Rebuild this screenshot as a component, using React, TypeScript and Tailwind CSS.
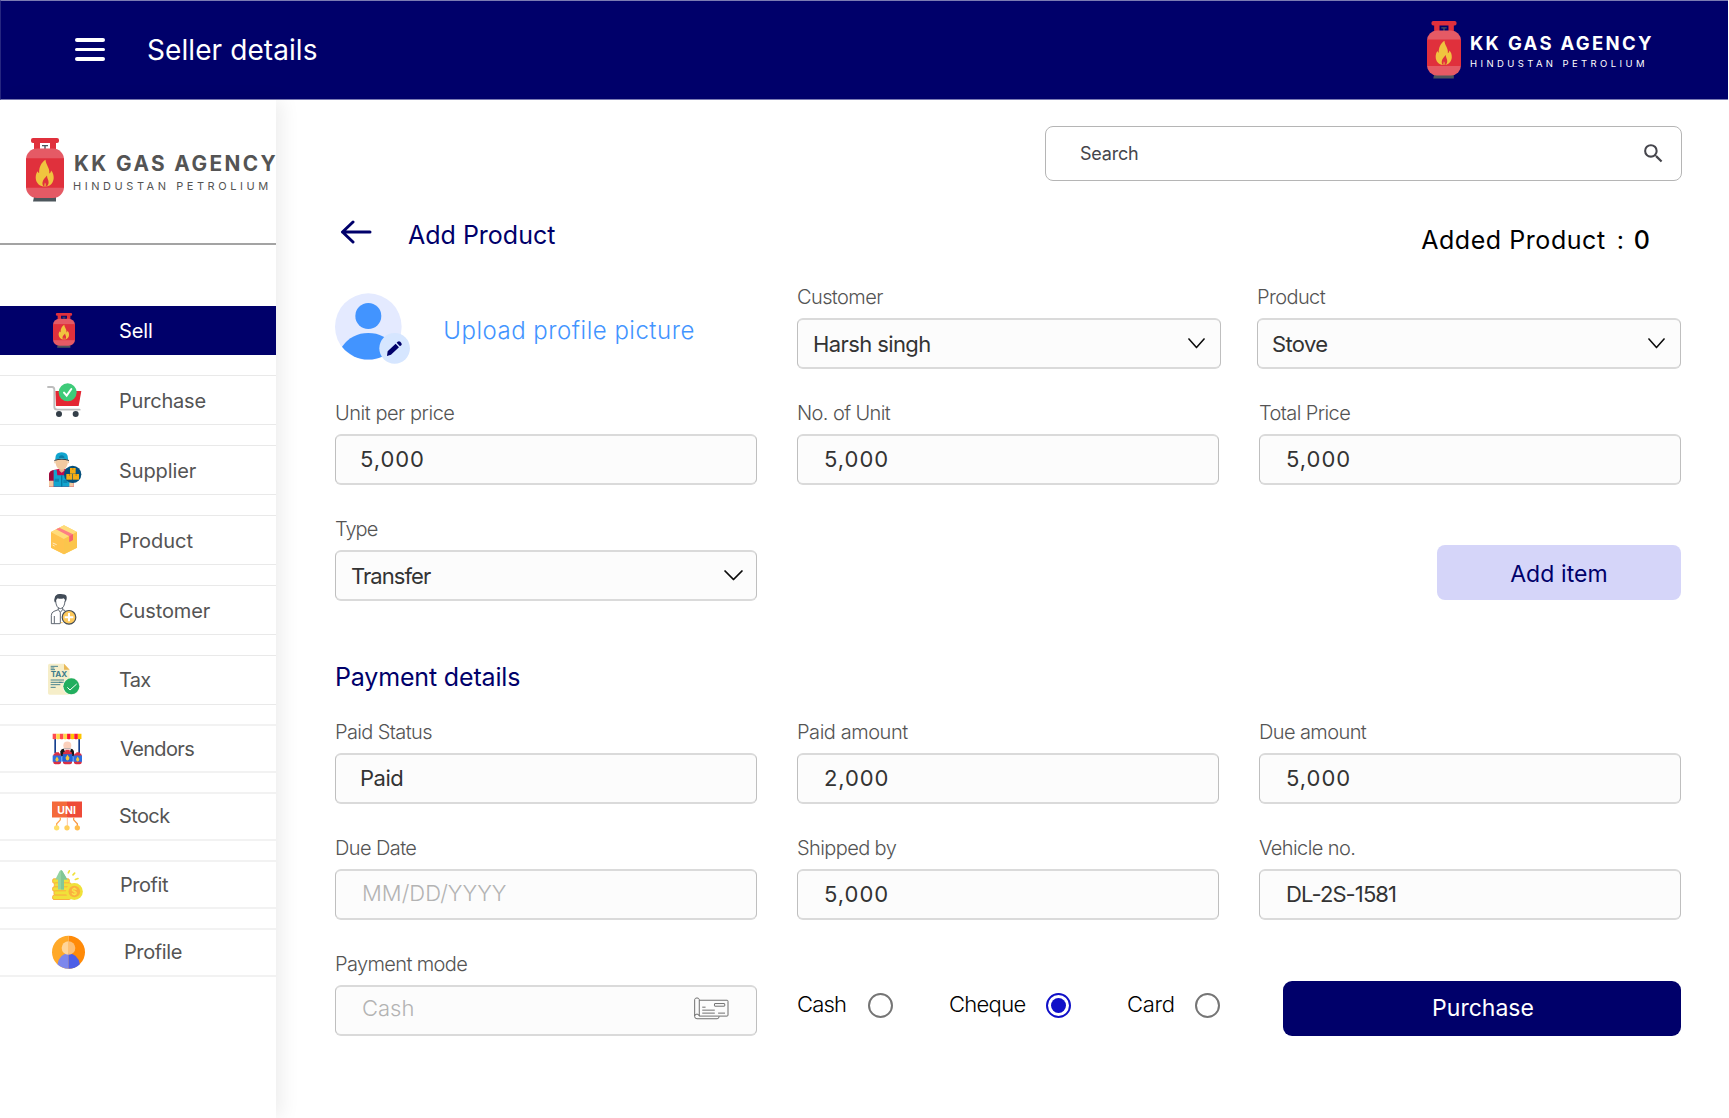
import type { ReactNode } from "react";
import { MdSearch } from "react-icons/md";

function Cylinder({ className }: { className: string }) {
  return (
    <svg viewBox="0 0 38 64" className={className} preserveAspectRatio="none">
      <path d="M8 3h6v10H8zM24 3h6v10h-6z" fill="#e0303c" />
      <rect x="5" y="0" width="28" height="5" rx="2" fill="#e0303c" />
      <path d="M16 7h6v1.3h-2.3V11h-1.4V8.300H16z" fill="#4d565c" />
      <path d="M8 59h22v4.500H7z" fill="#4d565c" />
      <rect x="0" y="10.500" width="38" height="49.500" rx="11" fill="#e55a65" />
      <path d="M0 20.300h38v29.400H0z" fill="#e0303c" />
      <path
        d="M19.500 21.700C19.800 27 24 29.500 23.300 35.500c1.200-.6 1.700-1.700 1.700-3 2 2 2.800 4.600 2.700 7.500-.2 4.500-3 7.700-7 8.500h-3.600C13 47.800 9.700 44.500 9.700 39.500c0-2.500.8-4.700 1.900-6.300.3 1 .8 1.600 1.500 1.900C13 28.800 15.300 24.500 19.500 21.700z"
        fill="#f0c43f"
      />
      <path d="M21 37.500c-.1 3.200 1.800 4.300 1.600 7.200-.1 1.800-1 3.200-2.300 3.800h-.9c.7-1.800.2-3-.5-4-.2 1.300-.6 2.400-.4 4h-.7c-1.100-.7-1.500-2.300-1.300-4 .4-3 2.600-4.500 4.500-7z" fill="#e0303c" />
    </svg>
  );
}

function NavIcon({ y, children }: { y: number; children: ReactNode }) {
  return (
    <svg viewBox={`141 ${y} 108 108`} className="h-9 w-9 shrink-0 overflow-visible">
      {children}
    </svg>
  );
}

function PurchaseIcon() {
  return (
    <NavIcon y={276}>
      <path d="M166 303h78l-8 45h-68z" fill="#e42733" />
      <path d="M144 291h12q7 0 7 8v52q0 8 9 8h67" fill="none" stroke="#bdbdbd" strokeWidth="5.500" strokeLinecap="round" />
      <circle cx="177" cy="372" r="9" fill="#333e48" />
      <circle cx="227" cy="372" r="9" fill="#333e48" />
      <circle cx="203" cy="307" r="27" fill="#3ecb79" />
      <path d="M192 308l8 9 14-20" fill="none" stroke="#fff" strokeWidth="6" strokeLinecap="round" />
    </NavIcon>
  );
}

function SupplierIcon() {
  return (
    <NavIcon y={486}>
      <path d="M147 591v-35q0-13 14-16l14-3h20l14 3q12 3 12 16v35z" fill="#c00a4d" />
      <path d="M147 572v-16q0-13 14-15v31z" fill="#9b0b3c" />
      <path d="M147 572h14v18h-14zM207 574h14v16h-14z" fill="#f1c9a0" />
      <path d="M161 590v-50h9l2 16h26l2-16h8v50z" fill="#11a5cf" />
      <path d="M183 556h4v34h-4z" fill="#057aa3" />
      <path d="M164 566h13v9h-13zM190 570h12v9h-12z" fill="#0c86b2" />
      <path d="M178 530h15v12l-8 6-7-6z" fill="#e0b38c" />
      <path d="M167 508h36v13q-3 17-18 18-15-1-18-18z" fill="#f1c9a0" />
      <path d="M163 512h4v8h-4zM203 512h4v8h-4z" fill="#f1c9a0" />
      <path d="M166 506q0-19 19-19t19 19v4q-19-7-38 0z" fill="#11a5cf" />
      <path d="M177 500q8-8 16 0v4h-16z" fill="#087ea8" />
      <path d="M163 510q22-8 44 0v3q-22-7-44 0z" fill="#333e48" />
      <circle cx="218" cy="553" r="26" fill="#05507c" />
      <g fill="#f5ad15">
        <rect x="210" y="534" width="17" height="17" />
        <rect x="199" y="552" width="18" height="17" />
        <rect x="219" y="552" width="18" height="17" />
      </g>
      <path d="M217 534h3v6h-3zM207 552h3v6h-3zM227 552h3v6h-3z" fill="#c98a08" />
    </NavIcon>
  );
}

function ProductIcon() {
  return (
    <NavIcon y={36}>
      <path d="M192 46l39 20v47l-39 20-39-20V66z" fill="#ffd15c" />
      <path d="M153 66l39 21v46l-39-20z" fill="#ffc34d" />
      <path d="M192 46l39 20-39 21-39-21z" fill="#ffdc7a" />
      <path d="M192 87l39-21v47l-39 20z" fill="#fbc54c" />
      <path d="M168 58l10-5 41 20v17l-11 6V79z" fill="#fd7f84" />
      <path d="M208 79l11-6v17l-11 6z" fill="#f5656d" />
      <path d="M158 99l12 5M158 105l6 3" stroke="#fff" strokeWidth="2" />
    </NavIcon>
  );
}

function CustomerIcon() {
  return (
    <NavIcon y={246}>
      <path d="M167 272q1 22 14 24 13-2 14-24" fill="#fff" stroke="#414b57" strokeWidth="2.500" />
      <path d="M164 277q-3-7 0-13 2-11 14-12 17-1 21 5 2 4 1 10l-3 10q-2-10-6-12-10 3-18 0-5 3-6 12z" fill="#414b57" />
      <path d="M175 293v6l-13 5q-8 3-8 12v25h26M188 293v6l8 3M163 318v22M175 299l6 8 7-8M181 307v34" fill="none" stroke="#414b57" strokeWidth="2.500" />
      <path d="M183 338h5" stroke="#ffc34d" strokeWidth="3" />
      <circle cx="207" cy="322" r="20.500" fill="#fdc95c" stroke="#414b57" strokeWidth="3.500" />
      <path d="M207 309v25M194 321.500h26" stroke="#fff" strokeWidth="6" />
    </NavIcon>
  );
}

function TaxIcon() {
  return (
    <NavIcon y={456}>
      <path d="M149 461h43l17 18v75h-60q-5 0-5-5v-83q0-5 5-5z" fill="#f6eec9" />
      <path d="M192 461l17 18h-17z" fill="#e9b958" />
      <path d="M152 469h22M152 474h11M152 479h13M152 510h40M152 517h40M152 524h29M152 532h15M177 517h8" stroke="#3d7d8c" strokeWidth="2.800" />
      <text x="152" y="502" fontFamily="Inter, sans-serif" fontWeight="700" fontSize="22" textLength="50" lengthAdjust="spacingAndGlyphs" fill="#3d7d8c">
        TAX
      </text>
      <circle cx="214" cy="529" r="26" fill="#f8f8ee" />
      <circle cx="214" cy="529" r="24" fill="#22ae5e" />
      <path d="M202 532l8 8 20-18" fill="none" stroke="#fff" strokeWidth="3" />
    </NavIcon>
  );
}

function VendorsIcon() {
  const stripes = ["#ff4b4f", "#ffd84a", "#ff4b4f", "#ffd84a", "#fd1735", "#fdc500", "#fd1735", "#fdc500"];
  return (
    <NavIcon y={31.5}>
      <path d="M163 54h5v44h-5zM235 54h5v44h-5z" fill="#16408f" />
      {stripes.map((fill, i) => (
        <path key={i} d={`M${158 + i * 10.8} 40h10.8v13q-5.400 7-10.800 0z`} fill={fill} />
      ))}
      <circle cx="202" cy="75" r="12" fill="#fbd0bc" />
      <path d="M181 108V92q2-7 12-8h17q10 1 12 8v16z" fill="#17171b" />
      <path d="M191 84h22l-3 10h-15z" fill="#f7f3f3" />
      <path d="M166 95h11v6h-11zM196 88h13v7h-13zM229 95h10v6h-10z" fill="#e0303c" />
      <rect x="160" y="98" width="23" height="33" rx="6" fill="#d92f45" />
      <rect x="189" y="93" width="27" height="38" rx="6" fill="#d92f45" />
      <rect x="222" y="98" width="23" height="33" rx="6" fill="#d92f45" />
      <path d="M158 105h26v19h-26zM220 105h26v19h-26z" fill="#2d6fe0" />
      <path d="M184 108h36v15h-36z" fill="#3f8bf5" />
      <path d="M188 101h29v22h-29z" fill="#2463d6" />
      <path d="M171 108l5 8q-1 7-5 7t-5-7zM202.500 103l6 9q-1 8-6 8t-6-8zM233 108l5 8q-1 7-5 7t-5-7z" fill="#f5c53c" />
    </NavIcon>
  );
}

function StockIcon() {
  return (
    <NavIcon y={235.5}>
      <path d="M156 243h45v48h-45z" fill="#f46a3b" />
      <path d="M201 243h45v48h-45z" fill="#ee4a38" />
      <path d="M181 291v7l-11 12v10" fill="none" stroke="#ffa850" strokeWidth="4" />
      <path d="M202 291v28" stroke="#fdbb8a" strokeWidth="2.500" />
      <path d="M221 291v7l11 12v10" fill="none" stroke="#f99746" strokeWidth="4" />
      <circle cx="170" cy="322" r="8" fill="#ffdf6b" />
      <circle cx="201" cy="322" r="8" fill="#ffcf5d" />
      <circle cx="232" cy="322" r="8" fill="#ffbb4d" />
      <text x="172" y="279" fontFamily="Inter, sans-serif" fontWeight="700" fontSize="30" textLength="56" lengthAdjust="spacingAndGlyphs" fill="#fff">
        UNI
      </text>
    </NavIcon>
  );
}

function ProfitIcon() {
  return (
    <NavIcon y={439.5}>
      <g fill="#f0e13a" stroke="#fbb03f" strokeWidth="3">
        <rect x="158" y="475" width="50" height="13" rx="4" />
        <rect x="163" y="487" width="50" height="13" rx="4" />
        <rect x="158" y="499" width="50" height="13" rx="4" />
        <rect x="162" y="511" width="48" height="13" rx="4" />
        <rect x="158" y="524" width="54" height="13" rx="4" />
      </g>
      <path d="M183 449q3 0 5 4l14 24h-10v30h-18v-30h-8l12-24q2-4 5-4z" fill="#93d3a2" />
      <path d="M183 449v58h9v-30h10l-14-24q-2-4-5-4z" fill="#82c796" />
      <circle cx="223" cy="513" r="25.500" fill="#f0e13a" />
      <circle cx="223" cy="513" r="17.500" fill="#fbb03f" />
      <text x="223" y="522" textAnchor="middle" fontFamily="Inter, sans-serif" fontWeight="600" fontSize="26" fill="#f7e84a">
        $
      </text>
      <path d="M208 451l-3 6M219 463l5-5M226 477l8-3" stroke="#f0e13a" strokeWidth="5" strokeLinecap="round" />
    </NavIcon>
  );
}

function ProfileIcon() {
  return (
    <NavIcon y={643.5}>
      <path d="M205.500 645.500a49.500 49.500 0 0 0 0 99z" fill="#ffa929" />
      <path d="M205.500 645.500a49.500 49.500 0 0 1 0 99z" fill="#ff8a08" />
      <path d="M205.500 698q-29 2-33 34 14 12.500 33 12.500z" fill="#7d87ec" />
      <path d="M205.500 698q29 2 34 33-14 13.500-34 13.500z" fill="#4d5ee6" />
      <path d="M205.500 662a20.500 20.500 0 0 0 0 41z" fill="#ffd59a" />
      <path d="M205.500 662a20.500 20.500 0 0 1 0 41z" fill="#fdbf75" />
    </NavIcon>
  );
}

const upperNav: { label: string; icon: ReactNode; text: string }[] = [
  { label: "Purchase", icon: <PurchaseIcon />, text: "pt-[2px] tracking-[-0.2px]" },
  { label: "Supplier", icon: <SupplierIcon />, text: "pt-[2px] tracking-[-0.1px]" },
  { label: "Product", icon: <ProductIcon />, text: "pt-[2px]" },
  { label: "Customer", icon: <CustomerIcon />, text: "pt-px tracking-[-0.1px]" },
  { label: "Tax", icon: <TaxIcon />, text: "tracking-[-0.7px]" },
];

const lowerNav: { label: string; icon: ReactNode; text: string }[] = [
  { label: "Vendors", icon: <VendorsIcon />, text: "tracking-[-0.65px] pl-px" },
  { label: "Stock", icon: <StockIcon />, text: "-mt-[2px] tracking-[-0.6px]" },
  { label: "Profit", icon: <ProfitIcon />, text: "tracking-[-0.45px] pl-px" },
  { label: "Profile", icon: <ProfileIcon />, text: "-mt-[2px] tracking-[-0.4px] pl-[5px]" },
];

function NavRow({ icon, label, text, box }: { icon: ReactNode; label: string; text: string; box: string }) {
  return (
    <a className={`flex items-center gap-9 pl-[47px] text-[20px] ${box}`}>
      {icon}
      <span className={text}>{label}</span>
    </a>
  );
}

function Sidebar() {
  return (
    <aside className="w-[276px] shrink-0 bg-white shadow-[6px_0_18px_rgba(0,0,0,0.07)]">
      <div className="flex h-[145px] items-start gap-[10px] border-b-2 border-[#a3a3a3] pl-[26px] pt-[38px] text-[#545454]">
        <Cylinder className="h-16 w-[38px] shrink-0" />
        <div className="w-[202px] shrink-0 pt-[15px] whitespace-nowrap">
          <div className="text-[20.800px] leading-[22px] font-bold tracking-[2.400px]">
            KK GAS AGENC<span className="tracking-normal">Y</span>
          </div>
          <div className="-ml-px mt-[5px] text-[11px] leading-[12px] tracking-[3.550px]">
            HINDUSTAN PETROLIU<span className="tracking-normal">M</span>
          </div>
        </div>
      </div>
      <nav className="pt-[61px] text-[#545454]">
        <a className="flex h-[49px] items-center gap-9 bg-[#00006a] pl-[47px] text-[20px] text-white">
          <span className="flex w-9 justify-center">
            <Cylinder className="mr-[2px] h-[35px] w-[22px]" />
          </span>
          <span className="pt-px tracking-[-0.1px]">Sell</span>
        </a>
        <div className="mt-5 flex flex-col gap-5">
          {upperNav.map((n) => (
            <NavRow key={n.label} {...n} box="h-[50px] border-y border-[#e9e9e9]" />
          ))}
        </div>
        <div className="mt-[19px] flex flex-col gap-[19px]">
          {lowerNav.map((n) => (
            <NavRow key={n.label} {...n} box="h-[49px] border-y-2 border-[#f2f2f2]" />
          ))}
        </div>
      </nav>
    </aside>
  );
}

function Label({ children, className }: { children: ReactNode; className?: string }) {
  return <div className={`h-6 text-[20px] leading-6 font-light text-[#545454] ${className ?? "tracking-[-0.6px]"}`}>{children}</div>;
}

function Chevron({ wide }: { wide?: boolean }) {
  return (
    <svg viewBox="0 0 18 11" className={wide ? "h-[11px] w-[19px]" : "h-[11px] w-[17px]"} preserveAspectRatio="none">
      <path d="M1 1l8 8.500L17 1" fill="none" stroke="#0c0c0c" strokeWidth="1.700" strokeLinecap="round" strokeLinejoin="round" />
    </svg>
  );
}

const boxClass =
  "mt-[9px] flex h-[51px] items-center justify-between rounded-[6px] border-x border-y-2 border-x-[#bfbfbf] border-y-[#dadada] bg-[#fcfcfc] text-[22px] text-[#333333]";

function Field({ label, value, labelClass, valueClass }: { label: string; value: string; labelClass?: string; valueClass?: string }) {
  return (
    <div className="w-[422px] shrink-0">
      <Label className={labelClass}>{label}</Label>
      <div className={`${boxClass} pl-[26px]`}>
        <span className={valueClass ?? "tracking-[1px]"}>{value}</span>
      </div>
    </div>
  );
}

function ChequeIcon() {
  return (
    <svg viewBox="1121 500 106 68" className="-mt-[4px] h-[23px] w-[35px]" fill="none" stroke="#6e6e6e" strokeWidth="3">
      <path d="M1137 509h84q3 0 3 3v42q0 3-3 3h-84V507q-1-5-7-5t-7 5v51q0 7 7 7h61q6 0 6-7M1123 557q0-6 7-6 6 0 7 6" />
      <rect x="1183" y="519" width="31" height="8" rx="1" />
      <path d="M1146 530h10M1146 539h38M1146 548h38M1194 548h21" />
    </svg>
  );
}

function Radio({ label, on, text }: { label: string; on?: boolean; text: string }) {
  return (
    <label className="flex items-center">
      <span className={`-mt-[3px] text-[22px] font-light text-black ${text}`}>{label}</span>
      <span
        className={
          on
            ? "flex h-[25px] w-[25px] items-center justify-center rounded-full border-2 border-[#1010c8]"
            : "h-[25px] w-[25px] rounded-full border-2 border-[#757575]"
        }
      >
        {on && <span className="h-[15px] w-[15px] rounded-full bg-[#1010c8]" />}
      </span>
    </label>
  );
}

function Avatar() {
  return (
    <svg viewBox="45 279 226 213" className="h-[71px] w-[75.300px] shrink-0">
      <circle cx="145" cy="380" r="100" fill="#e4eaff" />
      <circle cx="145" cy="348" r="39" fill="#4294ff" />
      <path d="M66 440Q96 399 145 399t79 41a100 100 0 0 1-158 0z" fill="#4294ff" />
      <circle cx="224" cy="445" r="46" fill="#d6e6ff" />
      <path d="M201 468l2-14 24-23 10 11-24 22zM230 428l3-3q4-3 8 0l3 4q3 4 0 7l-4 3z" fill="#00006a" />
    </svg>
  );
}

export default function App() {
  return (
    <div className="flex h-[1118px] w-[1729px] flex-col overflow-hidden bg-white font-['Inter',sans-serif]">
      <header className="flex h-[100px] w-[1728px] shrink-0 items-center justify-between border-y border-l border-y-[#7b7bb2] border-l-[#26267f] bg-[#00006a] text-white">
        <div className="flex items-center pl-[74px]">
          <div className="-mt-px flex w-[30px] flex-col gap-[6px]">
            <span className="h-[3.500px] rounded-full bg-white" />
            <span className="h-[3.500px] rounded-full bg-white" />
            <span className="h-[3.500px] rounded-full bg-white" />
          </div>
          <h1 className="pl-[42px] text-[28px] leading-none tracking-[0.08px]">Seller details</h1>
        </div>
        <div className="flex items-center gap-[10px] pr-[73px]">
          <Cylinder className="h-[58px] w-[34px]" />
          <div className="w-[184px] pt-[2px] whitespace-nowrap">
            <div className="-ml-[1px] text-[18.500px] leading-5 font-bold tracking-[2.310px]">KK GAS AGENCY</div>
            <div className="mt-[6px] -ml-[1px] text-[9.500px] leading-[10px] tracking-[3.400px]">HINDUSTAN PETROLIUM</div>
          </div>
        </div>
      </header>

      <div className="flex flex-1">
        <Sidebar />
        <main className="flex flex-1 flex-col pl-[59px]">
          <div className="mt-[26px] mr-[47px] flex h-[55px] w-[637px] items-center justify-between self-end rounded-lg border border-[#b5b5b5] pr-[15px] pl-[34px]">
            <span className="text-[18px] tracking-[-0.220px] text-[#45454c]">Search</span>
            <MdSearch className="h-[25px] w-[25px] text-[#45454c]" />
          </div>

          <div className="mt-[30px] flex h-[47px] w-[1315px] items-center">
            <svg viewBox="0 0 32 24" className="-mt-[6px] ml-[5px] h-6 w-8" fill="none" stroke="#00006a" strokeWidth="3" strokeLinecap="round" strokeLinejoin="round">
              <path d="M30 12H2.500M13 2L2.500 12 13 22" />
            </svg>
            <h2 className="ml-[36px] pt-[2px] text-[25px] text-[#00006a]">Add Product</h2>
            <div className="mt-[13px] ml-auto flex text-[25px] text-black">
              <span className="tracking-[0.550px]">Added Product</span>
              <span className="ml-[11px]">:</span>
              <span className="ml-[10px] font-medium">0</span>
            </div>
          </div>

          <div className="mt-[27px] flex">
            <div className="flex h-[84px] w-[462px] gap-[33px] pt-2">
              <Avatar />
              <span className="mt-[23px] h-[30px] text-[24px] leading-[30px] font-light tracking-[0.500px] text-[#4294ff]">Upload profile picture</span>
            </div>
            <div className="w-[424px]">
              <Label>Customer</Label>
              <div className={`${boxClass} pr-[15px] pl-[15px]`}>
                <span className="pt-[2px] tracking-[-0.600px]">Harsh singh</span>
                <Chevron />
              </div>
            </div>
            <div className="ml-9 w-[424px]">
              <Label>Product</Label>
              <div className={`${boxClass} pr-[15px] pl-[14px]`}>
                <span className="pt-[2px] tracking-[-0.650px]">Stove</span>
                <Chevron />
              </div>
            </div>
          </div>

          <div className="mt-8 flex gap-10">
            <Field label="Unit per price" value="5,000" labelClass="tracking-[-0.470px]" valueClass="-ml-[2px] tracking-[0.950px]" />
            <Field label="No. of Unit" value="5,000" />
            <Field label="Total Price" value="5,000" />
          </div>

          <div className="mt-8 flex w-[1346px] items-end justify-between">
            <div className="w-[422px]">
              <Label className="tracking-[-1px]">Type</Label>
              <div className={`${boxClass} pr-[13px] pl-[15px]`}>
                <span className="pt-px tracking-[-0.950px]">Transfer</span>
                <Chevron wide />
              </div>
            </div>
            <button className="mb-px h-[55px] w-[244px] rounded-lg bg-[#d5d5f9] pt-[3px] text-[23px] tracking-[0.100px] text-[#00006a]">Add item</button>
          </div>

          <h2 className="mt-[61px] h-[30px] text-[25px] leading-[31px] tracking-[-0.160px] text-[#00006a]">Payment details</h2>

          <div className="mt-7 flex gap-10">
            <Field label="Paid Status" value="Paid" labelClass="tracking-[-0.620px]" valueClass="-ml-[2px] tracking-[-0.500px]" />
            <Field label="Paid amount" value="2,000" labelClass="tracking-[-0.450px]" valueClass="tracking-[0.900px]" />
            <Field label="Due amount" value="5,000" />
          </div>

          <div className="mt-8 flex gap-10">
            <Field label="Due Date" value="MM/DD/YYYY" valueClass="-mt-[3px] font-light text-[#b3b3b3] tracking-[0.020px]" />
            <Field label="Shipped by" value="5,000" />
            <Field label="Vehicle no." value="DL-2S-1581" valueClass="tracking-[-0.900px]" />
          </div>

          <div className="mt-8 flex w-[1346px] items-end">
            <div className="w-[422px]">
              <Label className="tracking-[-0.620px]">Payment mode</Label>
              <div className={`${boxClass} pr-[27px] pl-[26px]`}>
                <span className="-mt-[5px] font-light text-[#b3b3b3]">Cash</span>
                <ChequeIcon />
              </div>
            </div>
            <div className="ml-10 flex h-[61px] w-[423px] items-center justify-between">
              <Radio label="Cash" text="w-[71px] tracking-[-0.800px]" />
              <Radio label="Cheque" on text="w-[97px] tracking-[-0.700px]" />
              <Radio label="Card" text="w-[68px] tracking-[-0.310px]" />
            </div>
            <button className="ml-auto h-[55px] w-[398px] rounded-[9px] bg-[#00006a] pl-[2px] text-[23px] text-white">Purchase</button>
          </div>
        </main>
      </div>
    </div>
  );
}
